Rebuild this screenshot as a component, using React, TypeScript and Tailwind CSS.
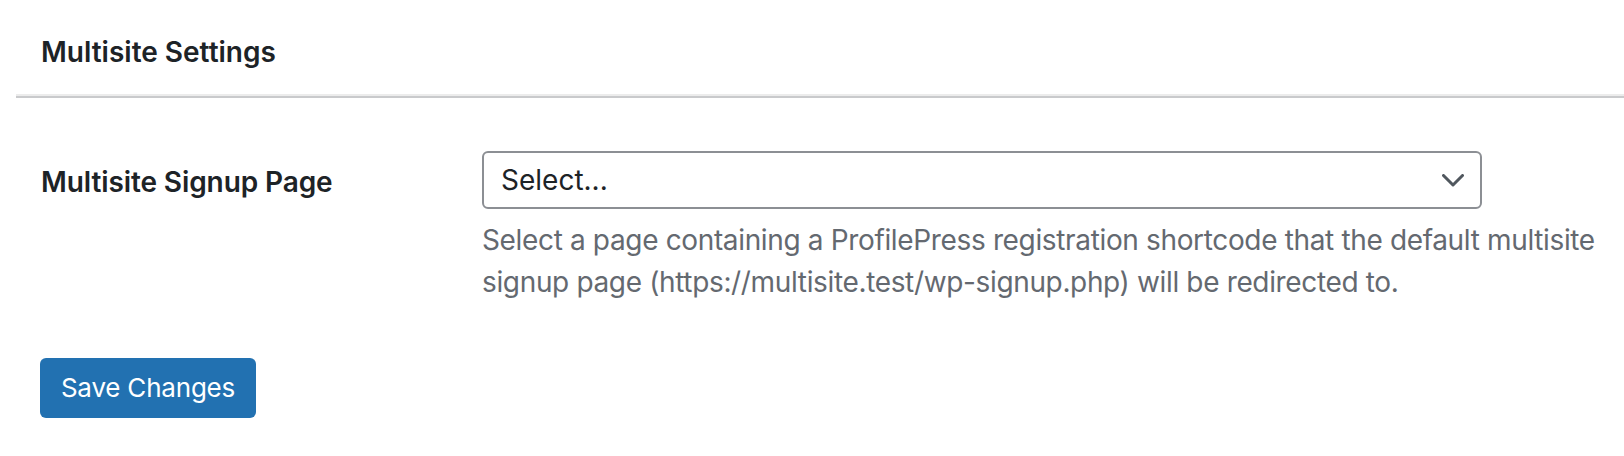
import React from 'react';

function Chevron() {
  return (
    <svg width="22" height="13" viewBox="0 0 22 13" fill="none" className="shrink-0">
      <polyline points="1.5,1.5 11,11 20.5,1.5" stroke="#50575e" strokeWidth="3" strokeLinecap="round" strokeLinejoin="round" />
    </svg>
  );
}

export default function App() {
  return (
    <div className="w-full h-[456px] bg-white text-[#1d2327] font-['Inter','Liberation_Sans',sans-serif] overflow-hidden">
      <div className="pt-[35px] pl-[41px] h-[94px]">
        <h2 className="text-[28px] leading-[34px] font-semibold">Multisite Settings</h2>
      </div>
      <div className="ml-[16px] h-[4px] border-t-2 border-b-2 border-t-[#ececec] border-b-[#c9cacc]" />

      <div className="flex items-start pl-[41px] pt-[53px]">
        <div className="w-[441px] shrink-0 pt-[14px]">
          <label className="text-[28px] leading-[34px] font-semibold tracking-[-0.1px]">Multisite Signup Page</label>
        </div>
        <div className="flex flex-col">
          <div className="w-[1000px] h-[58px] border-2 border-[#8c8f94] rounded-[6px] flex items-center justify-between pl-[17px] pr-[16px]">
            <span className="text-[28px] leading-[34px]">Select...</span>
            <Chevron />
          </div>
          <p className="mt-[10px] text-[28px] leading-[42px] text-[#646970] whitespace-nowrap tracking-[-0.35px]">
            Select a page containing a ProfilePress registration shortcode that the default multisite
            <br />
            signup page (https://multisite.test/wp-signup.php) will be redirected to.
          </p>
        </div>
      </div>

      <div className="pl-[40px] pt-[55px]">
        <button className="h-[60px] w-[216px] rounded-[6px] bg-[#2271b1] text-white text-[26px] leading-[34px] tracking-[-0.2px]">
          Save Changes
        </button>
      </div>
    </div>
  );
}
